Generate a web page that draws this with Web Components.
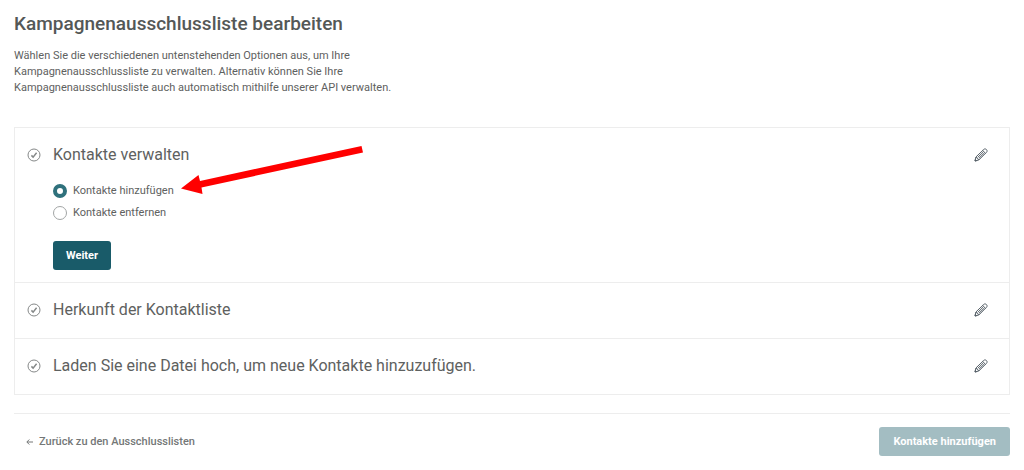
<!DOCTYPE html>
<html lang="de">
<head>
<meta charset="utf-8">
<meta name="viewport" content="width=device-width, initial-scale=1">
<title>Kampagnenausschlussliste bearbeiten</title>
<style>
  body { margin: 0; background: #fff; color: #5e6160; font: 11px/16px Roboto, "Liberation Sans", sans-serif; }
</style>
</head>
<body>
<exclusion-page>
  <page-intro slot="intro">
    <span slot="title">Kampagnenausschlussliste bearbeiten</span>
    Wählen Sie die verschiedenen untenstehenden Optionen aus, um Ihre Kampagnenausschlussliste zu verwalten. Alternativ können Sie Ihre Kampagnenausschlussliste auch automatisch mithilfe unserer API verwalten.
  </page-intro>
  <step-card>
    <span slot="title">Kontakte verwalten</span>
    <contact-options></contact-options>
  </step-card>
  <step-card><span slot="title">Herkunft der Kontaktliste</span></step-card>
  <step-card><span slot="title">Laden Sie eine Datei hoch, um neue Kontakte hinzuzufügen.</span></step-card>
  <page-footer slot="footer"></page-footer>
</exclusion-page>

<template id="exclusion-page">
  <style>
    :host { display: block; padding: 12px 14px 13px; }
    .steps { margin-top: 31px; border: 1px solid #ededed; }
    ::slotted(step-card:not(:last-of-type)) { border-bottom: 1px solid #ededed; }
  </style>
  <main>
    <slot name="intro"></slot>
    <div class="steps"><slot></slot></div>
    <slot name="footer"></slot>
  </main>
</template>

<template id="page-intro">
  <style>
    :host { display: block; }
    h1 { margin: 0; font-size: 19px; line-height: 24px; font-weight: 500; color: #545857; }
    p { margin: 12px 0 0; max-width: 390px; }
  </style>
  <h1><slot name="title"></slot></h1>
  <p><slot></slot></p>
</template>

<template id="step-card">
  <style>
    :host { display: block; }
    header { display: flex; align-items: center; box-sizing: border-box; height: 55px; padding: 0 21px 2px 12px; }
    .check { width: 14px; height: 14px; flex: none; margin-right: 12px; }
    h2 { flex: 1; margin: 0; font-size: 16px; line-height: 20px; font-weight: 400; }
    button { display: flex; padding: 0; border: 0; background: none; cursor: pointer; }
    .body { padding-left: 38px; }
  </style>
  <section>
    <header>
      <svg class="check" viewBox="0 0 14 14" fill="none" stroke="#858888" aria-hidden="true">
        <circle cx="7" cy="7" r="6"/>
        <path d="M4.4 7.4 6.1 9.1 9.6 4.8" stroke-width="1.5"/>
      </svg>
      <h2><slot name="title"></slot></h2>
      <button type="button" aria-label="Bearbeiten">
        <svg width="14" height="14" viewBox="0 0 14 14" fill="none" stroke="#566068" stroke-linejoin="round" aria-hidden="true">
          <path d="M1 13 1.9 9 9.7 1.5C10.5.7 11.5.7 12.4 1.5 13.3 2.4 13.3 3.5 12.5 4.3L4.8 12Z"/>
          <path d="M1.9 9 4.8 12M8.7 2.5 11.5 5.3M3.6 9.5 9.1 4.1M4.8 10.4 10.3 5"/>
          <path d="M1 13 1.3 11.5 2.5 12.6Z" fill="#566068"/>
        </svg>
      </button>
    </header>
    <div class="body"><slot></slot></div>
  </section>
</template>

<template id="contact-options">
  <style>
    :host { display: block; padding-bottom: 12px; }
    fieldset { display: flex; flex-direction: column; align-items: flex-start; gap: 6px; margin: 0 0 20px; padding: 0; border: 0; }
    label { position: relative; display: flex; align-items: center; gap: 6px; }
    input { appearance: none; box-sizing: border-box; width: 14px; height: 14px; margin: 0; border: 1px solid #a2a5a5; border-radius: 50%; background: #fff; }
    input:checked { border: 4px solid #2f717c; }
    .pointer { position: absolute; left: 100%; bottom: 3px; margin-left: 6px; pointer-events: none; }
  </style>
  <fieldset aria-label="Kontakte verwalten">
    <label><input type="radio" name="mode" checked>Kontakte hinzufügen
      <svg class="pointer" width="184" height="50" viewBox="0 0 184 50" aria-hidden="true">
        <path d="M1 42.5 18.5 29 20 35 181.5 0 183 6.5 21.5 41.5 22.5 48Z" fill="#f00"/>
      </svg>
    </label>
    <label><input type="radio" name="mode">Kontakte entfernen</label>
  </fieldset>
  <action-button>Weiter</action-button>
</template>

<template id="action-button">
  <style>
    :host { display: inline-flex; vertical-align: top; }
    button { height: 29px; padding: 0 13px; border: 0; border-radius: 3px; background: #195b69; color: #fff; font: inherit; font-weight: 700; cursor: pointer; }
    button:disabled { padding: 0 14px; background: #a3bdc2; cursor: default; }
  </style>
  <button type="button"><slot></slot></button>
</template>

<template id="page-footer">
  <style>
    :host { display: flex; align-items: center; justify-content: space-between; margin-top: 18px; padding-top: 13px; border-top: 1px solid #ededed; }
    a { display: flex; align-items: center; gap: 6px; padding-left: 12px; color: #747777; font-weight: 500; text-decoration: none; }
  </style>
  <a href="#listen">
    <svg width="7" height="6" viewBox="0 0 7 6" fill="none" stroke="#747777" aria-hidden="true"><path d="M7 3H1M3.3.5.8 3 3.3 5.5"/></svg>
    Zurück zu den Ausschlusslisten
  </a>
  <action-button disabled>Kontakte hinzufügen</action-button>
</template>

<script>
  class TemplateElement extends HTMLElement {
    constructor() {
      super();
      const template = document.getElementById(this.localName);
      this.attachShadow({ mode: "open" }).append(template.content.cloneNode(true));
    }
  }
  class ActionButton extends TemplateElement {
    static observedAttributes = ["disabled"];
    attributeChangedCallback() {
      this.shadowRoot.querySelector("button").disabled = this.hasAttribute("disabled");
    }
  }
  customElements.define("action-button", ActionButton);
  for (const name of ["contact-options", "page-footer", "page-intro", "step-card", "exclusion-page"]) {
    customElements.define(name, class extends TemplateElement {});
  }
</script>
</body>
</html>
